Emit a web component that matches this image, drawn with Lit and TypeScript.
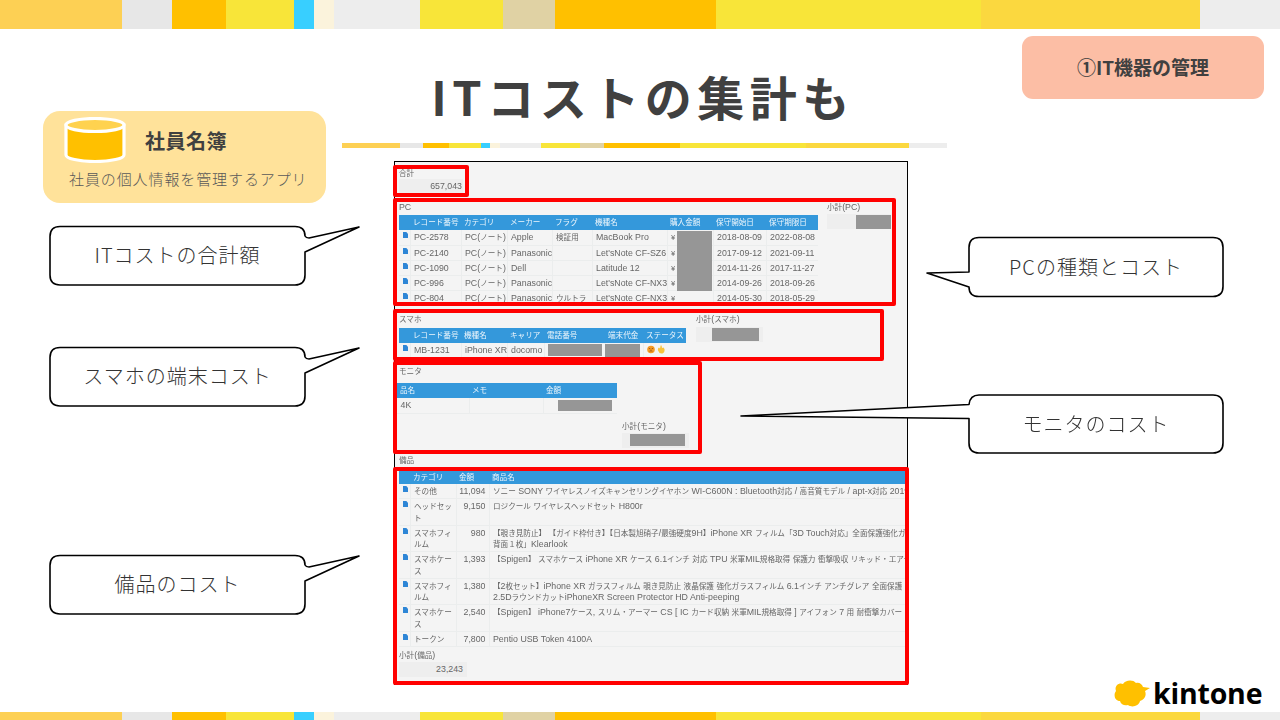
import { LitElement, html, css, svg } from "lit";
import { customElement } from "lit/decorators.js";

const SEGS: [string, number][] = [
  ["#FDD054", 122], ["#E7E7E7", 50], ["#FFC000", 54], ["#F8E539", 68], ["#38CFFF", 20],
  ["#FBF3DC", 20], ["#EDEDED", 86], ["#F8E539", 83], ["#E0D2A4", 52], ["#FFC000", 161],
  ["#F8E539", 265], ["#FBD83F", 219], ["#EDEDED", 80],
];

const mix = (s: string) =>
  s.split(/([^\x00-\x7f]+)/).map((p, i) => (i % 2 ? html`<span class="j">${p}</span>` : p));

const bar = (cls: string) => html`<div class="stripe ${cls}">
  ${SEGS.map(([c, w]) => html`<i style="background:${c};flex-grow:${w}"></i>`)}
</div>`;

const docIcon = svg`<svg class="doc" width="5" height="6" viewBox="0 0 5 6"><path d="M0 0H3.3L5 1.7V6H0Z" fill="#2E86D6"/></svg>`;

const PC_COLS = [11, 51, 46, 45, 40, 75, 46, 53, 52];
const PC_HEAD = ["", "レコード番号", "カテゴリ", "メーカー", "フラグ", "機種名", "購入金額", "保守開始日", "保守期限日"];
const PC_ROWS = [
  ["PC-2578", "PC(ノート)", "Apple", "検証用", "MacBook Pro", "¥", "2018-08-09", "2022-08-08"],
  ["PC-2140", "PC(ノート)", "Panasonic", "", "Let'sNote CF-SZ6", "¥", "2017-09-12", "2021-09-11"],
  ["PC-1090", "PC(ノート)", "Dell", "", "Latitude 12", "¥", "2014-11-26", "2017-11-27"],
  ["PC-996", "PC(ノート)", "Panasonic", "", "Let'sNote CF-NX3", "¥", "2014-09-26", "2018-09-26"],
  ["PC-804", "PC(ノート)", "Panasonic", "ウルトラ", "Let'sNote CF-NX3", "¥", "2014-05-30", "2018-05-29"],
];
const PHONE_COLS = [11, 51, 46, 37, 61, 38, 43];
const PHONE_HEAD = ["", "レコード番号", "機種名", "キャリア", "電話番号", "端末代金", "ステータス"];
const MON_COLS = [72, 74, 74];
const ITEM_COLS = [11, 46, 33, 416];
const ITEMS: { c: string; a: string; n: string[]; tall: boolean }[] = [
  { c: "その他", a: "11,094", n: ["ソニー SONY ワイヤレスノイズキャンセリングイヤホン WI-C600N : Bluetooth対応 / 高音質モデル / apt-x対応  2019年モデル"], tall: false },
  { c: "ヘッドセット", a: "9,150", n: ["ロジクール ワイヤレスヘッドセット H800r"], tall: true },
  { c: "スマホフィルム", a: "980", n: ["【覗き見防止】 【ガイド枠付き】【日本製旭硝子/最強硬度9H】iPhone XR フィルム「3D Touch対応」全面保護強化ガラス", "背面１枚」Klearlook"], tall: true },
  { c: "スマホケース", a: "1,393", n: ["【Spigen】 スマホケース iPhone XR ケース 6.1インチ 対応 TPU 米軍MIL規格取得 保護力 衝撃吸収 リキッド・エアー"], tall: true },
  { c: "スマホフィルム", a: "1,380", n: ["【2枚セット】iPhone XR ガラスフィルム 覗き見防止 液晶保護 強化ガラスフィルム 6.1インチ アンチグレア 全面保護 ブルー", "2.5DラウンドカットiPhoneXR Screen Protector HD Anti-peeping"], tall: true },
  { c: "スマホケース", a: "2,540", n: ["【Spigen】 iPhone7ケース, スリム・アーマー CS [ IC カード収納 米軍MIL規格取得 ] アイフォン 7 用 耐衝撃カバー (iPhone7)"], tall: true },
  { c: "トークン", a: "7,800", n: ["Pentio USB Token 4100A"], tall: false },
];

const cols = (w: number[]) => html`<colgroup>${w.map((v) => html`<col style="width:${v}px" />`)}</colgroup>`;

@customElement("app-root")
export class AppRoot extends LitElement {
  static styles = css`
    :host { display: block; width: 1280px; height: 720px; background: #fff; overflow: hidden;
      font-family: "Noto Sans CJK JP", "Noto Sans", sans-serif; color: #404040; }
    .stripe { display: flex; }
    .stripe i { display: block; flex-basis: 0; }
    .top { height: 29px; }
    .bottom { height: 8px; }
    .under { height: 5px; margin-top: 0; }
    .main { height: 683px; display: grid; grid-template-columns: 342px 605px 333px; }
    .left { display: flex; flex-direction: column; }
    .card { margin: 82px 0 0 43px; width: 283px; height: 92px; box-sizing: border-box; background: #FFE29A;
      border-radius: 17px; display: flex; flex-direction: column; flex: none; }
    .card-head { display: flex; align-items: flex-start; padding: 6px 0 0 21px; gap: 19px; height: 52px; flex: none; }
    .card-name { font-size: 20px; font-weight: 700; line-height: 30px; margin-top: 9px; letter-spacing: .5px; }
    .card-sub { font-size: 15px; letter-spacing: .9px; font-weight: 300; line-height: 20px; margin: 0 0 0 26px; color: #595959; white-space: nowrap; }
    .callout { display: block; position: relative; z-index: 3; overflow: visible; flex: none; }
    .callout path { fill: #fff; stroke: #000; stroke-width: 1.6; stroke-linejoin: round; }
    .callout text { font-size: 20px; font-weight: 300; fill: #333; letter-spacing: 1px; text-anchor: middle; dominant-baseline: central; }
    .c1 { margin: 22px 0 0 49px; }
    .c2 { margin: 59px 0 0 49px; }
    .c3 { margin: 146px 0 0 49px; }
    .center { min-width: 0; }
    .title { height: 114px; margin: 0; display: flex; align-items: center; justify-content: center;
      font-size: 47px; font-weight: 700; letter-spacing: 5.5px; padding: 20px 3px 0 0; box-sizing: border-box; white-space: nowrap; line-height: 60px; }
    .panel { margin: 13px 0 0 52px; width: 514px; height: 524px; box-sizing: border-box; border: 1px solid #000;
      background: #F4F4F4; position: relative; font-family: "Liberation Sans", "Noto Sans CJK JP", sans-serif;
      font-size: 8.8px; color: #666; }
    .shot { padding: 6px 0 0 4px; filter: blur(.3px); }
    .j { font-family: "Noto Sans CJK JP", sans-serif; font-size: 7.6px; line-height: 1; }
    .lbl { height: 10px; line-height: 10px; white-space: nowrap; }
    .field { background: #EEEEEE; height: 14px; line-height: 14px; text-align: right; padding-right: 1px; box-sizing: border-box; margin-top: 1px; position: relative; }
    .total { width: 64px; }
    .row { display: flex; align-items: flex-start; }
    .pc { margin-top: 9px; gap: 9px; }
    .phone { margin-top: 8px; gap: 10px; }
    .sub-pc { width: 64px; }
    .sub-pc .field { height: 15px; margin-top: 2px; }
    .sub-ph { width: 67px; }
    .sub-ph .field { height: 15px; margin-top: 3px; }
    .mon { margin-top: 8px; }
    .sub-mon { margin: 7.5px 0 0 223px; width: 67px; }
    .sub-mon .field { height: 15px; margin-top: 1.5px; }
    .equip-l { margin-top: 7px; }
    .sub-eq { margin-top: 3.5px; width: 68px; }
    .sub-eq .field { height: 15px; margin-top: 2px; padding-right: 4px; }
    .tw { position: relative; overflow: hidden; }
    table { border-collapse: collapse; table-layout: fixed; width: 100%; }
    th { background: #3498DB; color: #EEF6FC; font-weight: 400; height: 15px; padding: 0 0 0 3px; text-align: left; white-space: nowrap; line-height: 11px; overflow: hidden; box-sizing: border-box; }
    td { padding: 2px 0 0 3.5px; height: 15px; box-sizing: border-box; line-height: 11.5px; vertical-align: top; border-right: 1px solid #EBEDED; border-bottom: 1px solid #EBEDED; overflow: hidden; }
    td.nw { white-space: nowrap; }
    td.ic { padding: 2px 0 0 3.5px; }
    td.num { text-align: right; padding-right: 3px; padding-left: 0; }
    .doc { display: block; }
    tr.tall td { height: 26.5px; }
    .eq th { height: 13px; }
    .mask { position: absolute; background: #969696; }
    .m-pc { left: 278px; top: 16px; width: 35px; height: 60px; }
    .m-ph1 { left: 149px; top: 16px; width: 54px; height: 12px; }
    .m-ph2 { left: 206px; top: 16px; width: 35px; height: 13px; }
    .m-mon { left: 161px; top: 17px; width: 54px; height: 11px; }
    .m-f1 { left: 29px; top: 1px; width: 35px; height: 14px; }
    .m-f2 { left: 16px; top: 1.5px; width: 47px; height: 12.5px; }
    .m-f3 { left: 8px; top: 1px; width: 55px; height: 12px; }
    .red { position: absolute; border: 4px solid #FF0000; border-radius: 2px; box-sizing: border-box; }
    .r1 { left: -2px; top: 3px; width: 76px; height: 32px; }
    .r2 { left: -2px; top: 36px; width: 503px; height: 108px; }
    .r3 { left: -2px; top: 147px; width: 491px; height: 52px; }
    .r4 { left: -2px; top: 199px; width: 309px; height: 93px; }
    .r5 { left: -2px; top: 305px; width: 516px; height: 218px; }
    .right { display: flex; flex-direction: column; min-width: 0; }
    .badge { margin: 7px 0 0 75px; width: 242px; height: 63px; box-sizing: border-box; padding-bottom: 3px; background: #FCBEA5; border-radius: 11px; display: flex;
      align-items: center; justify-content: center; font-size: 19px; font-weight: 700; white-space: nowrap; flex: none; }
    .c4 { margin: 137px 0 0 -22px; }
    .c5 { margin: 96px 0 0 -207px; }
    .logo { margin: auto 0 5px 167px; display: flex; align-items: center; gap: 3px; }
    .logo span { font-family: "Open Sans", sans-serif; font-weight: 700; font-size: 28.5px; line-height: 28px; color: #000; letter-spacing: -.2px; }
  `;

  private callout(cls: string, w: number, h: number, d: string, tx: number, ty: number, label: string) {
    return html`<svg class="callout ${cls}" width=${w} height=${h} viewBox="0 0 ${w} ${h}">
      <path d=${d}></path><text x=${tx} y=${ty}>${label}</text></svg>`;
  }

  render() {
    const leftPath = "M11 1.5H246Q256 1.5 256 11Q257 13 260 13L310 2L256 27V50Q256 60 246 60H11Q1 60 1 50V11.5Q1 1.5 11 1.5Z";
    const pcPath = "M54 1.5H288Q298 1.5 298 11.5V50.5Q298 60.5 288 60.5H54Q44 60.5 44 51L2 37L44 36V11.5Q44 1.5 54 1.5Z";
    const monPath = "M239 1H473Q483 1 483 11V49Q483 59 473 59H239Q229 59 229 49V24.5L1 22L229 10.5Q230 1 239 1Z";
    return html`
      ${bar("top")}
      <div class="main">
        <div class="left">
          <div class="card">
            <div class="card-head">
              <svg width="62" height="46" viewBox="0 0 62 46" style="flex:none">
                <path d="M2 8V38C2 41.5 15 44.5 31 44.5S60 41.5 60 38V8Z" fill="#FFC000" stroke="#fff" stroke-width="3.2"/>
                <ellipse cx="31" cy="8" rx="29" ry="6.5" fill="#FFD24F" stroke="#fff" stroke-width="3.2"/>
              </svg>
              <div class="card-name">社員名簿</div>
            </div>
            <div class="card-sub">社員の個人情報を管理するアプリ</div>
          </div>
          ${this.callout("c1", 312, 62, leftPath, 128.5, 29, "ITコストの合計額")}
          ${this.callout("c2", 312, 62, leftPath, 128.5, 29, "スマホの端末コスト")}
          ${this.callout("c3", 312, 62, leftPath, 128.5, 29, "備品のコスト")}
        </div>

        <div class="center">
          <h1 class="title">ITコストの集計も</h1>
          ${bar("under")}
          <div class="panel">
            <div class="shot">
              <div class="total">
                <div class="lbl">${mix("合計")}</div>
                <div class="field">657,043</div>
              </div>

              <div class="row pc">
                <div style="width:419px">
                  <div class="lbl">PC</div>
                  <div class="tw" style="margin-top:3px">
                    <table>
                      ${cols(PC_COLS)}
                      <tr>${PC_HEAD.map((h) => html`<th>${mix(h)}</th>`)}</tr>
                      ${PC_ROWS.map((r) => html`<tr><td class="ic">${docIcon}</td>${r.map((c) => html`<td class="nw">${mix(c)}</td>`)}</tr>`)}
                    </table>
                    <div class="mask m-pc"></div>
                  </div>
                </div>
                <div class="sub-pc">
                  <div class="lbl">${mix("小計(PC)")}</div>
                  <div class="field"><div class="mask m-f1"></div></div>
                </div>
              </div>

              <div class="row phone">
                <div style="width:287px">
                  <div class="lbl">${mix("スマホ")}</div>
                  <div class="tw" style="margin-top:4px">
                    <table>
                      ${cols(PHONE_COLS)}
                      <tr>${PHONE_HEAD.map((h) => html`<th>${mix(h)}</th>`)}</tr>
                      <tr>
                        <td class="ic">${docIcon}</td><td class="nw">MB-1231</td><td class="nw">iPhone XR</td><td class="nw">docomo</td><td></td><td></td>
                        <td class="nw">
                          <svg width="19" height="9" viewBox="0 0 19 9" style="display:block">
                            <circle cx="4" cy="4.5" r="3.8" fill="#F59A23"/>
                            <path d="M1.8 3.2L3.4 4M6.2 3.2L4.6 4M2.6 6.3Q4 5 5.4 6.3" stroke="#8a4a10" stroke-width=".8" fill="none"/>
                            <path d="M11 5.5Q10.5 3 12 2.5L13 3.5L13.6 .5L14.6 .5L15 3L16.5 2.5L17.5 4Q18 7 16 8.3Q12.5 9.5 11 5.5Z" fill="#F7C33D"/>
                          </svg>
                        </td>
                      </tr>
                    </table>
                    <div class="mask m-ph1"></div>
                    <div class="mask m-ph2"></div>
                  </div>
                </div>
                <div class="sub-ph">
                  <div class="lbl">${mix("小計(スマホ)")}</div>
                  <div class="field"><div class="mask m-f2"></div></div>
                </div>
              </div>

              <div class="mon">
                <div class="lbl">${mix("モニタ")}</div>
                <div class="tw" style="margin:7px 0 0 -2px;width:220px">
                  <table>
                    ${cols(MON_COLS)}
                    <tr><th>${mix("品名")}</th><th>${mix("メモ")}</th><th>${mix("金額")}</th></tr>
                    <tr><td class="nw">4K</td><td></td><td></td></tr>
                  </table>
                  <div class="mask m-mon"></div>
                </div>
                <div class="sub-mon">
                  <div class="lbl">${mix("小計(モニタ)")}</div>
                  <div class="field"><div class="mask m-f3"></div></div>
                </div>
              </div>

              <div class="equip-l lbl">${mix("備品")}</div>
              <div class="tw eq" style="margin-top:6px;width:506px">
                <table>
                  ${cols(ITEM_COLS)}
                  <tr><th></th><th>${mix("カテゴリ")}</th><th>${mix("金額")}</th><th>${mix("商品名")}</th></tr>
                  ${ITEMS.map((it) => html`<tr class=${it.tall ? "tall" : ""}>
                    <td class="ic">${docIcon}</td>
                    <td><span class="j">${it.c}</span></td>
                    <td class="num nw">${it.a}</td>
                    <td class="nw">${it.n.map((l) => html`<div>${mix(l)}</div>`)}</td>
                  </tr>`)}
                </table>
              </div>
              <div class="sub-eq">
                <div class="lbl">${mix("小計(備品)")}</div>
                <div class="field">23,243</div>
              </div>
            </div>

            <div class="red r1"></div>
            <div class="red r2"></div>
            <div class="red r3"></div>
            <div class="red r4"></div>
            <div class="red r5"></div>
          </div>
        </div>

        <div class="right">
          <div class="badge">①IT機器の管理</div>
          ${this.callout("c4", 300, 62, pcPath, 171, 30, "PCの種類とコスト")}
          ${this.callout("c5", 485, 61, monPath, 356, 29.5, "モニタのコスト")}
          <div class="logo">
            <svg width="36" height="27" viewBox="0 0 36 27">
              <path d="M6 21C1 21 -1 15 2 11C0 6 5 2 9 4C11 0 19 -1 22 3C25 2 28 4 29 7L36 8L31 11C33 16 30 20 26 21C25 26 18 28 14 25C11 26 7 25 6 21Z" fill="#FFC000"/>
            </svg>
            <span>kintone</span>
          </div>
        </div>
      </div>
      ${bar("bottom")}
    `;
  }
}
